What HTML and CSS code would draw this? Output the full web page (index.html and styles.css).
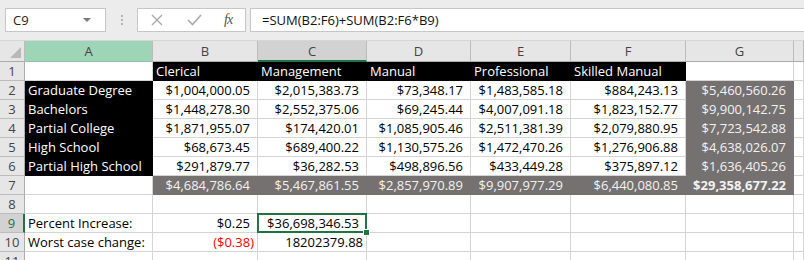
FILE: index.html
```html
<!DOCTYPE html>
<html lang="en">
<head>
    <meta charset="UTF-8">
    <title>Salary Sheet</title>
    <link rel="stylesheet" href="styles.css">
</head>
<body>
    <!-- Formula bar -->
    <div class="formula-bar">
        <div class="name-box">
            <span>C9</span>
            <span class="caret"></span>
        </div>
        <div class="grip"><i></i><i></i><i></i></div>
        <div class="fx-box">
            <span class="fx-icon cancel">
                <svg width="12" height="12" viewBox="0 0 12 12"><path d="M1 1 L11 11 M11 1 L1 11" stroke="#a8a8a8" stroke-width="1.4" fill="none"/></svg>
            </span>
            <span class="fx-icon enter">
                <svg width="15" height="12" viewBox="0 0 15 12"><path d="M1 6 L5.5 10.5 L14 1" stroke="#a8a8a8" stroke-width="1.6" fill="none"/></svg>
            </span>
            <span class="fx-label">fx</span>
        </div>
        <div class="formula-input">=SUM(B2:F6)+SUM(B2:F6*B9)</div>
    </div>

    <!-- Grid -->
    <div class="sheet">
        <div class="hd corner"></div>
        <div class="hd col-a">A</div>
        <div class="hd">B</div>
        <div class="hd col-sel">C</div>
        <div class="hd">D</div>
        <div class="hd">E</div>
        <div class="hd">F</div>
        <div class="hd">G</div>
        <div class="hd"></div>

        <div class="rh">1</div>
        <div class="c"></div>
        <div class="c dark">Clerical</div>
        <div class="c dark">Management</div>
        <div class="c dark">Manual</div>
        <div class="c dark">Professional</div>
        <div class="c dark">Skilled Manual</div>
        <div class="c"></div>
        <div class="c"></div>

        <div class="rh">2</div>
        <div class="c dark">Graduate Degree</div>
        <div class="c num">$1,004,000.05</div>
        <div class="c num">$2,015,383.73</div>
        <div class="c num">$73,348.17</div>
        <div class="c num">$1,483,585.18</div>
        <div class="c num">$884,243.13</div>
        <div class="c num gray">$5,460,560.26</div>
        <div class="c"></div>

        <div class="rh">3</div>
        <div class="c dark">Bachelors</div>
        <div class="c num">$1,448,278.30</div>
        <div class="c num">$2,552,375.06</div>
        <div class="c num">$69,245.44</div>
        <div class="c num">$4,007,091.18</div>
        <div class="c num">$1,823,152.77</div>
        <div class="c num gray">$9,900,142.75</div>
        <div class="c"></div>

        <div class="rh">4</div>
        <div class="c dark">Partial College</div>
        <div class="c num">$1,871,955.07</div>
        <div class="c num">$174,420.01</div>
        <div class="c num">$1,085,905.46</div>
        <div class="c num">$2,511,381.39</div>
        <div class="c num">$2,079,880.95</div>
        <div class="c num gray">$7,723,542.88</div>
        <div class="c"></div>

        <div class="rh">5</div>
        <div class="c dark">High School</div>
        <div class="c num">$68,673.45</div>
        <div class="c num">$689,400.22</div>
        <div class="c num">$1,130,575.26</div>
        <div class="c num">$1,472,470.26</div>
        <div class="c num">$1,276,906.88</div>
        <div class="c num gray">$4,638,026.07</div>
        <div class="c"></div>

        <div class="rh">6</div>
        <div class="c dark">Partial High School</div>
        <div class="c num">$291,879.77</div>
        <div class="c num">$36,282.53</div>
        <div class="c num">$498,896.56</div>
        <div class="c num">$433,449.28</div>
        <div class="c num">$375,897.12</div>
        <div class="c num gray">$1,636,405.26</div>
        <div class="c"></div>

        <div class="rh">7</div>
        <div class="c"></div>
        <div class="c num gray">$4,684,786.64</div>
        <div class="c num gray">$5,467,861.55</div>
        <div class="c num gray">$2,857,970.89</div>
        <div class="c num gray">$9,907,977.29</div>
        <div class="c num gray">$6,440,080.85</div>
        <div class="c num gray bold">$29,358,677.22</div>
        <div class="c"></div>

        <div class="rh">8</div>
        <div class="c"></div><div class="c"></div><div class="c"></div><div class="c"></div>
        <div class="c"></div><div class="c"></div><div class="c"></div><div class="c"></div>

        <div class="rh row-sel">9</div>
        <div class="c">Percent Increase:</div>
        <div class="c num">$0.25</div>
        <div class="c num active">$36,698,346.53</div>
        <div class="c"></div><div class="c"></div><div class="c"></div><div class="c"></div><div class="c"></div>

        <div class="rh">10</div>
        <div class="c">Worst case change:</div>
        <div class="c num neg">($0.38)</div>
        <div class="c plain">18202379.88</div>
        <div class="c"></div><div class="c"></div><div class="c"></div><div class="c"></div><div class="c"></div>

        <div class="rh">11</div>
        <div class="c"></div><div class="c"></div><div class="c"></div><div class="c"></div>
        <div class="c"></div><div class="c"></div><div class="c"></div><div class="c"></div>
    </div>
</body>
</html>
```

FILE: styles.css
```css
/* --- General Setup --- */
:root {
    --grid-line: #d4d4d4;
    --header-bg: #e6e6e6;
    --header-line: #bcbcbc;
    --excel-green: #217346;
    --cell-dark: #000000;
    --cell-gray: #767171;
}

body {
    margin: 0;
    width: 804px;
    height: 260px;
    overflow: hidden;
    background: #ffffff;
    font-family: 'Open Sans', 'Liberation Sans', sans-serif;
    font-size: 13px;
    color: #000;
}

/* --- Formula Bar --- */
.formula-bar {
    height: 41px;
    display: flex;
    align-items: flex-start;
    padding: 8px 0 0 5px;
    box-sizing: border-box;
    background-color: #ececec;
    border-bottom: 1px solid #d6d6d6;
}

.name-box {
    width: 101px;
    height: 24px;
    box-sizing: border-box;
    background: #fff;
    border: 1px solid #c6c6c6;
    display: flex;
    align-items: center;
    justify-content: space-between;
    padding: 0 14px 0 7px;
    color: #222;
}

.caret {
    width: 0;
    height: 0;
    border-left: 4px solid transparent;
    border-right: 4px solid transparent;
    border-top: 4px solid #7a7a7a;
}

.grip {
    width: 31px;
    height: 24px;
    display: flex;
    flex-direction: column;
    align-items: center;
    justify-content: center;
    gap: 2px;
}

.grip i {
    width: 2px;
    height: 2px;
    background: #b4b4b4;
}

.fx-box {
    width: 109px;
    height: 24px;
    box-sizing: border-box;
    background: #fff;
    border: 1px solid #c6c6c6;
    display: flex;
    align-items: center;
    padding-left: 13px;
}

.fx-icon {
    display: flex;
    align-items: center;
}

.cancel { margin-right: 24px; }
.enter { margin-right: 22px; }

.fx-label {
    font-family: 'Liberation Serif', serif;
    font-style: italic;
    font-size: 14px;
    color: #555;
    letter-spacing: -1px;
}

.formula-input {
    flex: 1;
    height: 24px;
    margin-left: 4px;
    box-sizing: border-box;
    background: #fff;
    border: 1px solid #c6c6c6;
    border-right: none;
    padding-left: 11px;
    line-height: 22px;
    color: #111;
}

/* --- Sheet Grid --- */
.sheet {
    display: grid;
    grid-template-columns: 25px 128px 105px 109px 104px 100px 115px 108px 10px;
    grid-template-rows: 21px repeat(11, 19px);
}

.hd {
    background: var(--header-bg);
    border-right: 1px solid var(--header-line);
    border-bottom: 1px solid #ababab;
    box-sizing: border-box;
    text-align: center;
    line-height: 20px;
    color: #444;
}

.corner {
    position: relative;
}

.corner::after {
    content: '';
    position: absolute;
    right: 3px;
    bottom: 3px;
    border-left: 11px solid transparent;
    border-bottom: 11px solid #b8b8b8;
}

.col-a {
    background: #9fd5b7;
    border-bottom-color: #8fc4a6;
}

.col-sel {
    background: #d2d2d2;
    border-bottom: 2px solid var(--excel-green);
}

.rh {
    background: var(--header-bg);
    border-right: 1px solid #ababab;
    border-bottom: 1px solid var(--header-line);
    box-sizing: border-box;
    text-align: center;
    line-height: 18px;
    color: #444;
}

.row-sel {
    background: #d2d2d2;
    color: var(--excel-green);
    border-right: 2px solid var(--excel-green);
}

.c {
    border-right: 1px solid var(--grid-line);
    border-bottom: 1px solid var(--grid-line);
    box-sizing: border-box;
    padding: 0 3px 0 3px;
    line-height: 18px;
    white-space: nowrap;
    overflow: visible;
}

.num {
    text-align: right;
    padding-right: 7px;
}

.plain {
    text-align: right;
}

.dark {
    background: var(--cell-dark);
    border-color: var(--cell-dark);
    color: #fff;
}

.gray {
    background: var(--cell-gray);
    border-color: var(--cell-gray);
    color: #f2f2f2;
}

.bold {
    font-weight: 700;
}

.neg {
    color: #ff0000;
    padding-right: 3px;
}

/* active cell outline and fill handle */
.active {
    position: relative;
}

.active::before {
    content: '';
    position: absolute;
    left: -1px;
    top: -1px;
    right: -1px;
    bottom: -1px;
    border: 2px solid var(--excel-green);
}

.active::after {
    content: '';
    position: absolute;
    right: -4px;
    bottom: -4px;
    width: 5px;
    height: 5px;
    background: var(--excel-green);
    border: 1px solid #fff;
}
```
